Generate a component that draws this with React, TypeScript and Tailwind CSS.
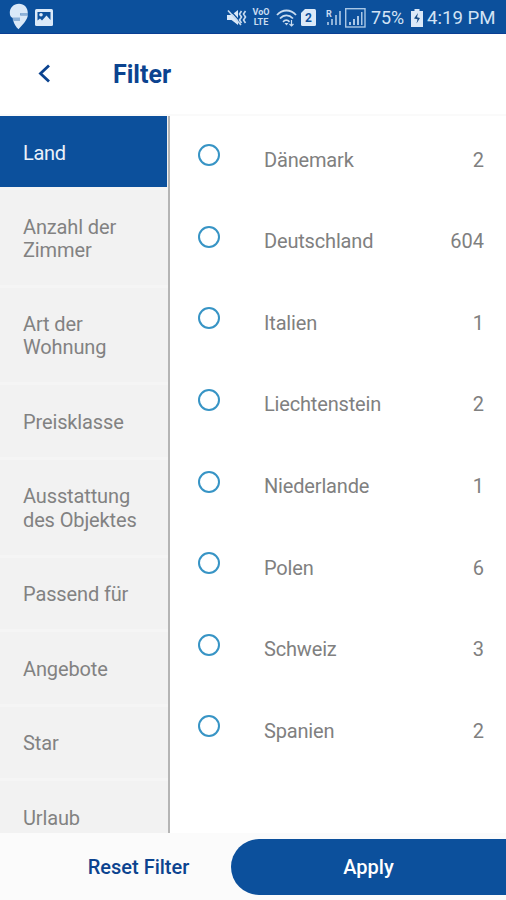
const categories = [
  { lines: ["Anzahl der", "Zimmer"] },
  { lines: ["Art der", "Wohnung"] },
  { lines: ["Preisklasse"] },
  { lines: ["Ausstattung", "des Objektes"] },
  { lines: ["Passend für"] },
  { lines: ["Angebote"] },
  { lines: ["Star"] },
  { lines: ["Urlaub"] },
];

const countries: [string, number][] = [
  ["Dänemark", 2],
  ["Deutschland", 604],
  ["Italien", 1],
  ["Liechtenstein", 2],
  ["Niederlande", 1],
  ["Polen", 6],
  ["Schweiz", 3],
  ["Spanien", 2],
];

function PinIcon() {
  return (
    <svg className="mb-[2px] ml-[9px] h-[27px] w-5 shrink-0" viewBox="0 0 20 27">
      <path d="M10 .8C4.500.8.8 4.800.8 9.800c0 2.700 1 4.700 3 5.200h7v2.500H4.200c.8 3.500 2.800 6.500 5.300 8.700 4-4.200 9.300-10 9.300-14h-7.500v-2h7.500C18.800 4.500 15.200.8 10 .8Z" fill="#dbe9f8" />
      <path d="M3.500 14.500h7.500v3.500H4ZM11.300 10h7.500v2.500h-7.500Z" fill="#8fb2d8" />
    </svg>
  );
}

function PhotoIcon() {
  return (
    <svg className="mb-px ml-[6px] h-[17px] w-[18px] shrink-0" viewBox="0 0 18 17">
      <rect width="18" height="17" rx="1.500" fill="#dbe9f8" />
      <path d="M2.500 3h13v8l-4-4.500-4.500 5-2-2-2.500 2Z" fill="#0c509c" />
      <circle cx="6" cy="5.800" r="1.800" fill="#dbe9f8" />
    </svg>
  );
}

function MuteIcon() {
  return (
    <svg className="h-[18px] w-5 shrink-0" viewBox="0 0 20 18">
      <path d="M0 6h4.500L11 1v15l-6.500-5H0Z" fill="#dbe9f8" />
      <path d="M2.500.5 14.500 14" stroke="#0c509c" strokeWidth="1.200" />
      <path d="m1 1.500 13 14.500M14.500 2l-2 3 2 3-2 3 2 3M18.500 2l-2 3 2 3-2 3 2 3" fill="none" stroke="#c9dcf0" strokeWidth="1.600" />
    </svg>
  );
}

function WifiIcon() {
  return (
    <svg className="ml-[6px] h-[18px] w-[21px] shrink-0" viewBox="0 0 21 18" fill="none" stroke="#c9dcf0" strokeWidth="1.800">
      <path d="M1 6c5.500-6 13.500-6 19 0M4 9.500c4-4.200 9-4.200 13 0M7 12.800c2.200-2.200 4.500-2.200 6.500 0" />
      <path d="m8.500 14 2 2.500 2-2.500Z" fill="#c9dcf0" stroke="none" />
      <path d="M15.500 11v6m-2-2 2 2 2-2" strokeWidth="1.200" />
    </svg>
  );
}

function SimIcon() {
  return (
    <svg className="ml-[4px] h-[17px] w-[15px] shrink-0" viewBox="0 0 15 17">
      <path d="M4 0h9.500Q15 0 15 1.500v14q0 1.500-1.500 1.500h-12Q0 17 0 15.500V4Z" fill="#dbe9f8" />
      <text x="7.500" y="13" textAnchor="middle" fontSize="12" fontWeight="700" fontFamily="Roboto, sans-serif" fill="#0c509c">2</text>
    </svg>
  );
}

function SignalIcons() {
  return (
    <svg className="ml-[9px] h-5 w-[41px] shrink-0" viewBox="0 0 41 20">
      <text x="1" y="8.500" fontSize="9" fontWeight="700" fontFamily="Roboto, sans-serif" fill="#c9dcf0">R</text>
      <path d="M2 14h2v3H2zM6 11h2v6H6zM10 7h2v10h-2zM14 3h2v14h-2z" fill="#8fb2d8" />
      <rect x="20.700" y=".7" width="19.300" height="18.300" fill="none" stroke="#a9c7e6" strokeWidth="1.400" />
      <path d="M24 14h2v3h-2zM28 11h2v6h-2zM32 8h2v9h-2zM36 4h1.500v13H36z" fill="#a9c7e6" />
    </svg>
  );
}

function BatteryIcon() {
  return (
    <svg className="ml-[6px] h-[18px] w-3 shrink-0" viewBox="0 0 12 18">
      <path d="M3.500 0h5v2H12v16H0V2h3.500Z" fill="#dbe9f8" />
      <path d="M7 4 3 9.500l3.500.7-1 4.300L9 9l-3-.7Z" fill="#174d87" />
    </svg>
  );
}

function StatusBar() {
  return (
    <header className="flex h-[34px] shrink-0 items-center border-b border-[#0a3f93] bg-[#0c509c] pt-[2px] text-[#d2e3f5]">
      <PinIcon />
      <PhotoIcon />
      <div className="ml-[174px] flex shrink-0 items-center">
        <MuteIcon />
        <div className="ml-[5px] flex w-[18px] shrink-0 flex-col items-center gap-px text-[9px] leading-[9px] font-bold text-[#c9dcf0]">
          <span className="block h-[9px]">VoO</span>
          <span className="block h-[9px]">LTE</span>
        </div>
        <WifiIcon />
        <SimIcon />
        <SignalIcons />
      </div>
      <span className="ml-[5px] w-[34px] shrink-0 origin-left scale-x-[0.94] whitespace-nowrap text-[19px] leading-none">75%</span>
      <BatteryIcon />
      <span className="ml-[4px] origin-left scale-x-[0.98] whitespace-nowrap text-[19px] leading-none">4:19 PM</span>
    </header>
  );
}

export default function App() {
  return (
    <div className="flex h-[900px] w-[506px] flex-col overflow-hidden bg-white font-[Roboto,sans-serif]">
      <StatusBar />
      <div className="flex h-[82px] shrink-0 items-center border-b-2 border-[#fafafa] text-[#0b438f]">
        <svg className="ml-[38px] h-5 w-3 shrink-0" viewBox="0 0 12 20" fill="none" stroke="currentColor" strokeWidth="2.800">
          <path d="m11 1.500-8.500 8 8.500 8" />
        </svg>
        <h1 className="ml-[63px] pt-px text-[25px] leading-none font-bold">Filter</h1>
      </div>
      <div className="flex h-[717px] shrink-0">
        <nav className="w-[170px] shrink-0 overflow-hidden border-r-2 border-[#b5b5b5] bg-[#f2f2f2]">
          <div className="mr-px flex h-[71px] items-center bg-[#0c509c] pt-[2px] pl-[23px] text-[20px] tracking-[-0.3px] text-[#eaf2fa]">Land</div>
          <ul>
            {categories.map(({ lines }) => (
              <li key={lines[0]} className="border-t-[3px] border-[#f5f5f5] pt-[25.600px] pb-[22.700px] pl-[23px] text-[20px] leading-[23.200px] tracking-[-0.13px] text-[#828282]">
                {lines.map((line) => (
                  <span key={line} className="block whitespace-nowrap">{line}</span>
                ))}
              </li>
            ))}
          </ul>
        </nav>
        <ul className="flex-1 pt-[2px]">
          {countries.map(([name, count]) => (
            <li key={name} className="flex h-[81.600px] items-center pr-[22px] pl-[28px] text-[20px] text-[#808080]">
              <span className="mb-[7px] h-[22px] w-[22px] shrink-0 rounded-full border-2 border-[#3794c5]" />
              <span className="ml-[44px] pt-[1.600px] tracking-[-0.17px]">{name}</span>
              <span className="ml-auto pt-[1.600px]">{count}</span>
            </li>
          ))}
        </ul>
      </div>
      <footer className="flex h-[67px] shrink-0 bg-[#fbfbfb] pt-[6px] pb-[5px] text-[20px] font-medium">
        <button className="w-[231px] pl-[46px] whitespace-nowrap text-[#0b438f]">Reset Filter</button>
        <button className="flex-1 rounded-l-full bg-[#0c509c] text-white">Apply</button>
      </footer>
    </div>
  );
}
